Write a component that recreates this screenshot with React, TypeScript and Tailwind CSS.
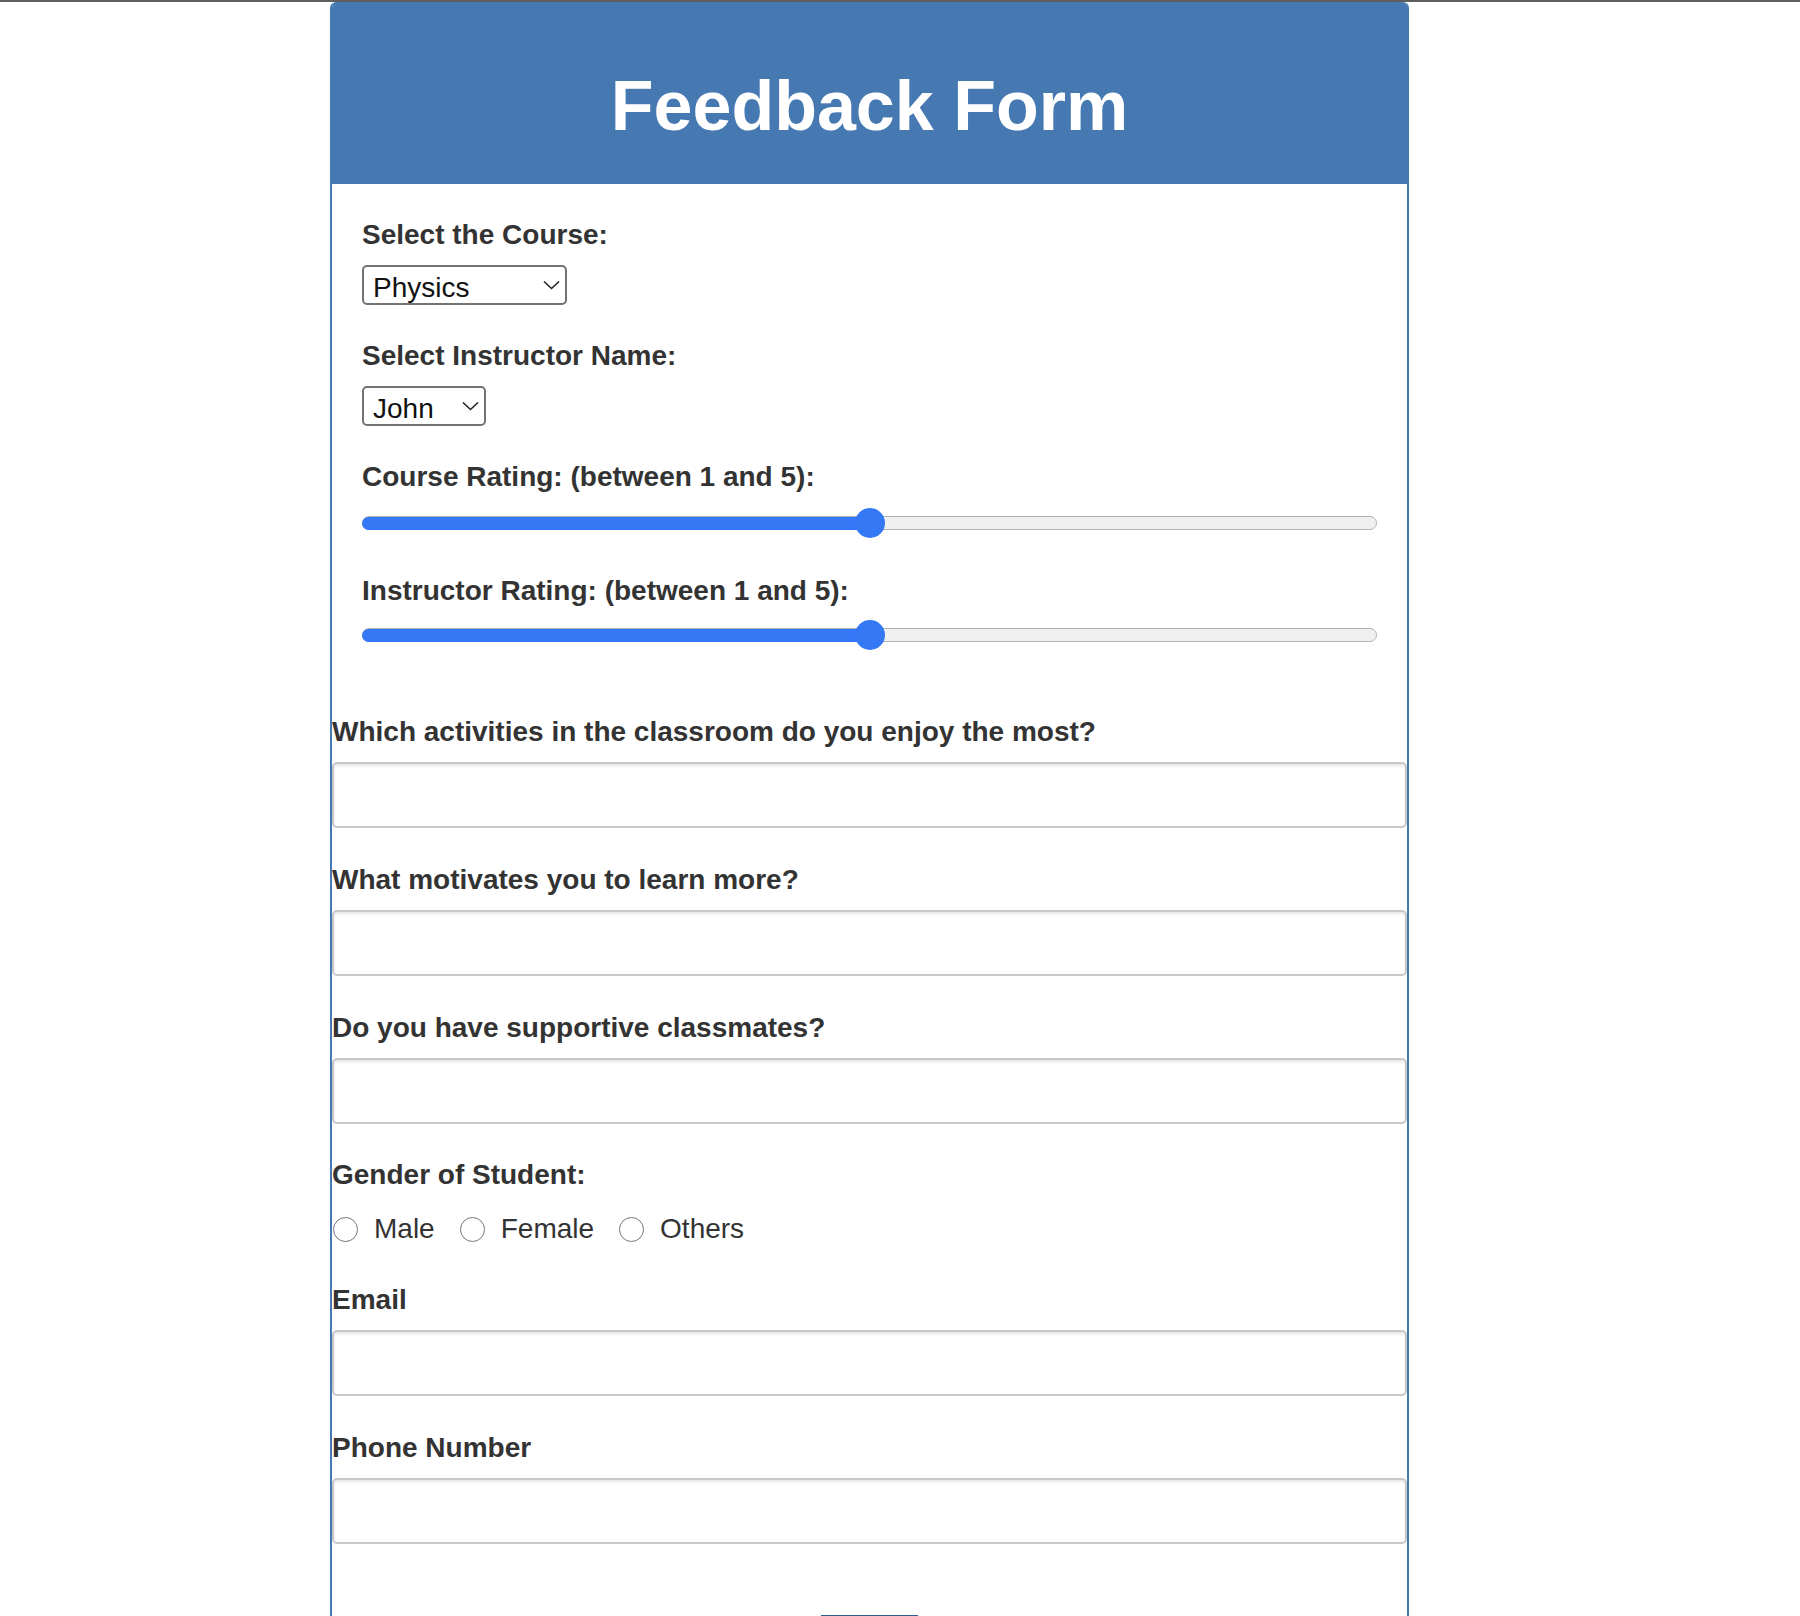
import { useState } from 'react';

const courses = ['Physics', 'Chemistry', 'Mathematics', 'Biology'];
const instructors = ['John', 'Maria', 'David'];
const genders = ['Male', 'Female', 'Others'];

const questions = [
  'Which activities in the classroom do you enjoy the most?',
  'What motivates you to learn more?',
  'Do you have supportive classmates?',
];

function Label({ children, htmlFor }: { children: React.ReactNode; htmlFor?: string }) {
  return (
    <label htmlFor={htmlFor} className="block text-[28px] leading-[32px] font-bold text-[#333]">
      {children}
    </label>
  );
}

function Chevron() {
  return (
    <svg
      width="17"
      height="10"
      viewBox="0 0 17 10"
      className="pointer-events-none absolute right-[7px] top-1/2 -translate-y-1/2"
    >
      <polyline points="1,1.5 8.5,8.5 16,1.5" fill="none" stroke="#222" strokeWidth="1.6" />
    </svg>
  );
}

function RangeSlider({ value, min, max }: { value: number; min: number; max: number }) {
  // fraction along the track, used for fill width and thumb position
  const pct = ((value - min) / (max - min)) * 100;
  return (
    <div role="slider" aria-valuenow={value} aria-valuemin={min} aria-valuemax={max} className="relative h-[30px] w-full">
      <div className="absolute left-0 right-0 top-[8px] h-[14px] rounded-full border-[1.5px] border-[#b3b3b3] bg-[#efefef]" />
      <div
        className="absolute left-0 top-[8.5px] h-[13px] rounded-l-full bg-[#3478f6]"
        style={{ width: `${pct}%` }}
      />
      <div
        className="absolute top-0 h-[30px] w-[30px] -translate-x-1/2 rounded-full bg-[#3478f6]"
        style={{ left: `${pct}%` }}
      />
    </div>
  );
}

function TextField({ id }: { id: string }) {
  return (
    <input
      id={id}
      type="text"
      className="block h-[66px] w-full rounded-[5px] border-2 border-[#c8c8c8] bg-white px-3 text-[28px] shadow-[inset_0_2px_3px_rgba(0,0,0,0.1)] outline-none"
    />
  );
}

export default function App() {
  const [course, setCourse] = useState('Physics');
  const [instructor, setInstructor] = useState('John');

  return (
    <div className="min-h-screen bg-white font-['Liberation_Sans',Helvetica,Arial,sans-serif]">
      <div className="h-[2px] w-full bg-[#5e5e5e]" />

      <form className="ml-[330px] w-[1079px] overflow-hidden rounded-t-[6px] border-x-2 border-[#4679b2]">
        <div className="bg-[#4679b2] pt-[64px] pb-[38px] text-center">
          <h1 className="text-[70px] leading-[80px] font-bold text-white">Feedback Form</h1>
        </div>

        <div className="px-[30px] pt-[35px]">
          <div>
            <Label htmlFor="course">Select the Course:</Label>
            <div className="relative mt-[14px] w-[205px]">
              <select
                id="course"
                value={course}
                onChange={(e) => setCourse(e.target.value)}
                className="block h-[40px] w-full appearance-none rounded-[5px] border-2 border-[#737373] bg-white pl-[9px] text-[28px] text-[#111] outline-none"
              >
                {courses.map((c) => (
                  <option key={c}>{c}</option>
                ))}
              </select>
              <Chevron />
            </div>
          </div>

          <div className="mt-[35px]">
            <Label htmlFor="instructor">Select Instructor Name:</Label>
            <div className="relative mt-[14px] w-[124px]">
              <select
                id="instructor"
                value={instructor}
                onChange={(e) => setInstructor(e.target.value)}
                className="block h-[40px] w-full appearance-none rounded-[5px] border-2 border-[#737373] bg-white pl-[9px] text-[28px] text-[#111] outline-none"
              >
                {instructors.map((n) => (
                  <option key={n}>{n}</option>
                ))}
              </select>
              <Chevron />
            </div>
          </div>

          <div className="mt-[35px]">
            <Label>Course Rating: (between 1 and 5):</Label>
            <div className="mt-[15px]">
              <RangeSlider value={3} min={1} max={5} />
            </div>
          </div>

          <div className="mt-[37px]">
            <Label>Instructor Rating: (between 1 and 5):</Label>
            <div className="mt-[13px]">
              <RangeSlider value={3} min={1} max={5} />
            </div>
          </div>
        </div>

        <div className="mt-[66px]">
          {questions.map((q, i) => (
            <div key={q} className={i === 0 ? '' : 'mt-[36px]'}>
              <Label htmlFor={`q${i}`}>{q}</Label>
              <div className="mt-[14px]">
                <TextField id={`q${i}`} />
              </div>
            </div>
          ))}

          <div className="mt-[35px]">
            <Label>Gender of Student:</Label>
            <div className="mt-[22px] flex items-center">
              {genders.map((g, i) => (
                <label key={g} className="flex items-center text-[28px] leading-[32px] text-[#333]">
                  <input
                    type="radio"
                    name="gender"
                    value={g}
                    className={`m-0 h-[25px] w-[25px] appearance-none rounded-full border-[1.75px] border-[#767676] bg-white ${i === 0 ? 'ml-[1px]' : 'ml-[25px]'}`}
                  />
                  <span className="ml-[16px]">{g}</span>
                </label>
              ))}
            </div>
          </div>

          <div className="mt-[39px]">
            <Label htmlFor="email">Email</Label>
            <div className="mt-[14px]">
              <TextField id="email" />
            </div>
          </div>

          <div className="mt-[36px]">
            <Label htmlFor="phone">Phone Number</Label>
            <div className="mt-[14px]">
              <TextField id="phone" />
            </div>
          </div>

          <div className="mt-[71px] flex justify-center pb-[40px]">
            <button
              type="submit"
              className="h-[50px] w-[97px] border-2 border-[#2f5d90] bg-[#4679b2] text-[24px] text-white"
            >
              Submit
            </button>
          </div>
        </div>
      </form>
    </div>
  );
}
